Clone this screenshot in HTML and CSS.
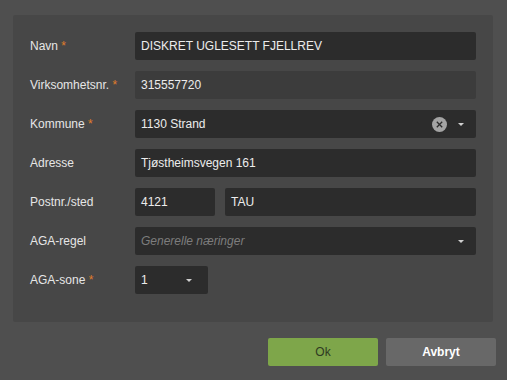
FILE: index.html
```html
<!DOCTYPE html>
<html>
<head>
<meta charset="utf-8">
<link rel="stylesheet" href="styles.css">
</head>
<body>
<div class="dialog">
  <div class="panel">
    <div class="row">
      <label class="lbl">Navn <span class="req">*</span></label>
      <div class="field"><span class="val">DISKRET UGLESETT FJELLREV</span></div>
    </div>
    <div class="row">
      <label class="lbl">Virksomhetsnr. <span class="req">*</span></label>
      <div class="field ro"><span class="val">315557720</span></div>
    </div>
    <div class="row">
      <label class="lbl">Kommune <span class="req">*</span></label>
      <div class="field sel"><span class="val">1130 Strand</span>
        <span class="clear"><svg width="15" height="15" viewBox="0 0 15 15"><circle cx="7.5" cy="7.5" r="7.5" fill="#a4a4a4"/><path d="M4.8 4.8 L10.2 10.2 M10.2 4.8 L4.8 10.2" stroke="#2c2c2c" stroke-width="1.3"/></svg></span>
        <span class="caret"></span>
      </div>
    </div>
    <div class="row">
      <label class="lbl">Adresse</label>
      <div class="field"><span class="val">Tjøstheimsvegen 161</span></div>
    </div>
    <div class="row">
      <label class="lbl">Postnr./sted</label>
      <div class="pair">
        <div class="field zip"><span class="val">4121</span></div>
        <div class="field"><span class="val">TAU</span></div>
      </div>
    </div>
    <div class="row">
      <label class="lbl">AGA-regel</label>
      <div class="field sel"><span class="val ph">Generelle næringer</span><span class="caret"></span></div>
    </div>
    <div class="row">
      <label class="lbl">AGA-sone <span class="req">*</span></label>
      <div class="field sel small"><span class="val">1</span><span class="caret"></span></div>
    </div>
  </div>
  <div class="buttons">
    <button class="btn ok">Ok</button>
    <button class="btn cancel">Avbryt</button>
  </div>
</div>
</body>
</html>
```
FILE: styles.css
```css
html, body {
  margin: 0;
  padding: 0;
  background: #4f4f4f;
  font-family: "Liberation Sans", Arial, sans-serif;
  font-size: 12px;
}
.dialog {
  width: 507px;
  height: 380px;
  padding: 15px 0 0 13px;
  box-sizing: border-box;
}
.panel {
  width: 480px;
  box-sizing: border-box;
  background: #474747;
  padding: 17px 17px 28px 17px;
  display: flex;
  flex-direction: column;
  gap: 11px;
  border-radius: 2px;
}
.row {
  display: flex;
  align-items: center;
  height: 28px;
}
.lbl {
  width: 105px;
  flex: none;
  color: #e6e6e6;
}
.req {
  color: #e07d2a;
}
.field {
  flex: 1;
  height: 28px;
  background: #2c2c2c;
  border-radius: 2px;
  display: flex;
  align-items: center;
  padding: 0 6px;
  box-sizing: border-box;
  color: #ececec;
}
.field.ro {
  background: #3c3c3c;
}
.val {
  flex: 1;
  white-space: nowrap;
}
.val.ph {
  color: #7d7d7d;
  font-style: italic;
}
.pair {
  flex: 1;
  display: flex;
  gap: 10px;
}
.field.zip {
  flex: none;
  width: 80px;
}
.field.small {
  flex: none;
  width: 73px;
}
.clear {
  display: flex;
  margin-right: 11px;
}
.caret {
  width: 0;
  height: 0;
  border-left: 3px solid transparent;
  border-right: 3px solid transparent;
  border-top: 3px solid #d0d0d0;
  margin-right: 6px;
  margin-top: 1px;
}
.small .caret {
  margin-right: 10px;
}
.buttons {
  display: flex;
  justify-content: flex-end;
  gap: 8px;
  margin-top: 16px;
  padding-right: 11px;
}
.btn {
  width: 110px;
  height: 28px;
  border: none;
  border-radius: 2px;
  font-family: "Liberation Sans", Arial, sans-serif;
  font-size: 12px;
  padding: 0;
}
.ok {
  background: #7ea64a;
  color: #2f3a22;
}
.cancel {
  background: #686868;
  color: #ffffff;
  font-weight: bold;
}
```
